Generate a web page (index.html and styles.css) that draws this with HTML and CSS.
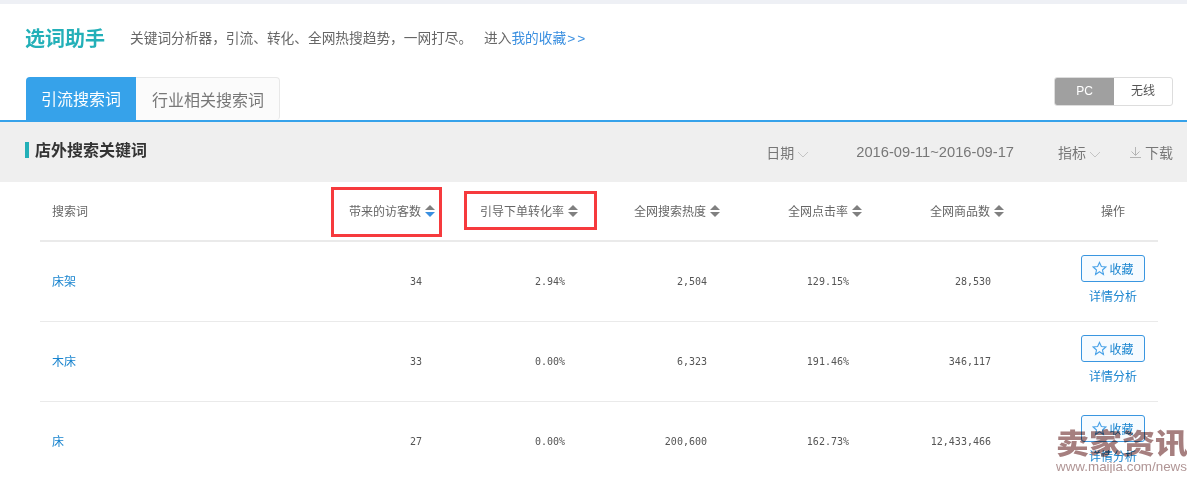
FILE: index.html
```html
<!DOCTYPE html>
<html>
<head>
  <title>选词助手</title>
  <link rel="stylesheet" href="styles.css">
</head>
<body>
  <div class="top-strip"></div>
  <div class="page-head">
    <h1 class="page-title">选词助手</h1>
    <p class="page-desc">关键词分析器，引流、转化、全网热搜趋势，一网打尽。</p>
    <p class="page-link">进入<a href="#">我的收藏<span class="more">&gt;&gt;</span></a></p>
  </div>

  <div class="tab-bar">
    <div class="tab active">引流搜索词</div>
    <div class="tab">行业相关搜索词</div>
    <div class="device-switch">
      <div class="device active">PC</div>
      <div class="device">无线</div>
    </div>
  </div>

  <div class="section-bar">
    <h2 class="section-title">店外搜索关键词</h2>
    <div class="section-tools">
      <span class="tool tool-date">日期<svg class="chevron" viewBox="0 0 12 7"><path d="M1 1l5 5 5-5"/></svg></span>
      <span class="tool tool-range">2016-09-11~2016-09-17</span>
      <span class="tool tool-metric">指标<svg class="chevron" viewBox="0 0 12 7"><path d="M1 1l5 5 5-5"/></svg></span>
      <span class="tool tool-download"><svg class="download" viewBox="0 0 11 11"><path d="M5.500 0v8M1.500 4.500l4 4 4-4M0 10.500h11"/></svg>下载</span>
    </div>
  </div>

  <div class="table">
    <div class="row head">
      <div class="cell first">搜索词</div>
      <div class="cell num">带来的访客数<span class="sort down"></span></div>
      <div class="cell num">引导下单转化率<span class="sort"></span></div>
      <div class="cell num">全网搜索热度<span class="sort"></span></div>
      <div class="cell num">全网点击率<span class="sort"></span></div>
      <div class="cell num">全网商品数<span class="sort"></span></div>
      <div class="cell ops">操作</div>
    </div>

    <div class="row">
      <div class="cell first"><a href="#">床架</a></div>
      <div class="cell val">34</div>
      <div class="cell val">2.94%</div>
      <div class="cell val">2,504</div>
      <div class="cell val">129.15%</div>
      <div class="cell val">28,530</div>
      <div class="cell ops">
        <button class="fav-btn" type="button"><svg class="star" viewBox="0 0 16 16"><path d="M8 1.500l2 4.400 4.700.5-3.500 3.200 1 4.700L8 11.400l-4.200 2.900 1-4.700L1.300 6.400l4.700-.5z"/></svg>收藏</button>
        <a href="#" class="detail">详情分析</a>
      </div>
    </div>

    <div class="row">
      <div class="cell first"><a href="#">木床</a></div>
      <div class="cell val">33</div>
      <div class="cell val">0.00%</div>
      <div class="cell val">6,323</div>
      <div class="cell val">191.46%</div>
      <div class="cell val">346,117</div>
      <div class="cell ops">
        <button class="fav-btn" type="button"><svg class="star" viewBox="0 0 16 16"><path d="M8 1.500l2 4.400 4.700.5-3.500 3.200 1 4.700L8 11.400l-4.200 2.900 1-4.700L1.300 6.400l4.700-.5z"/></svg>收藏</button>
        <a href="#" class="detail">详情分析</a>
      </div>
    </div>

    <div class="row">
      <div class="cell first"><a href="#">床</a></div>
      <div class="cell val">27</div>
      <div class="cell val">0.00%</div>
      <div class="cell val">200,600</div>
      <div class="cell val">162.73%</div>
      <div class="cell val">12,433,466</div>
      <div class="cell ops">
        <button class="fav-btn" type="button"><svg class="star" viewBox="0 0 16 16"><path d="M8 1.500l2 4.400 4.700.5-3.500 3.200 1 4.700L8 11.400l-4.200 2.900 1-4.700L1.300 6.400l4.700-.5z"/></svg>收藏</button>
        <a href="#" class="detail">详情分析</a>
      </div>
    </div>
  </div>

  <div class="red-box box-one"></div>
  <div class="red-box box-two"></div>

  <div class="watermark">
    <div class="wm-name">卖家资讯</div>
    <div class="wm-url">www.maijia.com/news</div>
  </div>
</body>
</html>
```

FILE: styles.css
```css
html, body {
  height: 478px;
  overflow: hidden;
}
body {
  margin: 0;
  position: relative;
  background-color: #fff;
  color: #666;
  font-family: "Liberation Sans", "Noto Sans CJK SC", sans-serif;
  font-size: 12px;
}
a {
  color: #1a85cf;
  text-decoration: none;
}
h1, h2, p {
  margin: 0;
  font-weight: normal;
}
.top-strip {
  height: 4px;
  background-color: #eef0f5;
}
.page-head {
  display: flex;
  align-items: center;
  height: 73px;
  padding: 0 0 7px 25px;
  box-sizing: border-box;
}
.page-title {
  color: #23b0b8;
  font-size: 20px;
  font-weight: 700;
  width: 105px;
}
.page-desc {
  font-size: 13.7px;
  color: #666;
  width: 354px;
  white-space: nowrap;
}
.page-link {
  font-size: 13.7px;
}
.page-link a {
  color: #3a8fe0;
}
.more {
  margin-left: 1px;
  letter-spacing: 2px;
}
.tab-bar {
  display: flex;
  align-items: flex-end;
  height: 43px;
  padding-left: 26px;
  padding-right: 14px;
}
.tab {
  height: 43px;
  line-height: 45px;
  box-sizing: border-box;
  font-size: 16px;
  color: #777;
  background-color: #fbfbfb;
  border: 1px solid #e8e8e8;
  border-bottom: none;
  border-left: none;
  border-radius: 0 4px 4px 0;
  padding: 0 15px 0 16px;
}
.tab.active {
  color: #fff;
  background-color: #36a2ea;
  border: none;
  border-radius: 4px 0 0 0;
  padding: 0 15px;
}
.device-switch {
  display: flex;
  margin-left: auto;
  align-self: flex-start;
  height: 29px;
  border: 1px solid #ddd;
  border-radius: 3px;
  overflow: hidden;
  box-sizing: border-box;
}
.device {
  width: 58px;
  line-height: 27px;
  text-align: center;
  color: #555;
}
.device.active {
  width: 59px;
  background-color: #a0a0a0;
  color: #fff;
}
.section-bar {
  display: flex;
  height: 60px;
  background-color: #efefef;
  border-top: 2px solid #36a2ea;
  padding: 0 14px 0 25px;
}
.section-title {
  align-self: flex-start;
  margin-top: 20px;
  height: 16px;
  line-height: 17px;
  border-left: 4px solid #23b0b8;
  padding-left: 6px;
  font-size: 16px;
  font-weight: 700;
  color: #333;
}
.section-tools {
  display: flex;
  align-items: center;
  margin-left: auto;
  height: 60px;
  font-size: 14px;
  color: #777;
}
.tool-range {
  margin: 0 44px 0 47px;
  font-size: 14.7px;
}
.tool-download {
  margin-left: 29px;
}
.chevron {
  width: 12px;
  height: 7px;
  margin-left: 3px;
  fill: none;
  stroke: #c4c4c4;
}
.download {
  width: 11px;
  height: 11px;
  margin-right: 4px;
  fill: none;
  stroke: #b5b5b5;
}
.table {
  margin: 0 29px 0 40px;
}
.row {
  display: grid;
  grid-template-columns: 252px 143px 143px 142px 142px 142px 1fr;
  height: 80px;
  border-bottom: 1px solid #eaeaea;
  box-sizing: border-box;
}
.row.head {
  height: 60px;
  border-bottom: 2px solid #eaeaea;
}
.cell {
  display: flex;
  align-items: center;
  justify-content: flex-end;
}
.cell.first {
  justify-content: flex-start;
  padding-left: 12px;
  padding-bottom: 2px;
}
.cell.val {
  padding-right: 13px;
  font-family: "DejaVu Sans Mono", monospace;
  font-size: 10px;
  color: #555;
}
.cell.ops {
  flex-direction: column;
  justify-content: center;
  padding-left: 64px;
  padding-bottom: 2px;
}
.row.head .cell {
  padding-bottom: 2px;
}
.sort {
  display: inline-flex;
  flex-direction: column;
  justify-content: space-between;
  height: 12px;
  margin-left: 4px;
  margin-top: 2px;
}
.sort::before,
.sort::after {
  content: "";
  border-left: 5px solid transparent;
  border-right: 5px solid transparent;
}
.sort::before {
  border-bottom: 5px solid #808080;
}
.sort::after {
  border-top: 5px solid #808080;
}
.sort.down::after {
  border-top-color: #3a8fe0;
}
.fav-btn {
  display: flex;
  align-items: center;
  justify-content: center;
  width: 64px;
  height: 27px;
  padding: 0 0 1px;
  border: 1px solid #3a96e0;
  border-radius: 3px;
  background-color: #f6fbff;
  color: #1a85cf;
  font-family: inherit;
  font-size: 12px;
}
.star {
  width: 15px;
  height: 15px;
  margin-right: 2px;
  fill: none;
  stroke: #4aa3e8;
  stroke-width: 1.2;
}
.detail {
  margin-top: 6px;
  line-height: 18px;
}
.red-box {
  position: absolute;
  border: 3px solid #f63a3d;
  box-sizing: border-box;
}
.box-one {
  left: 331px;
  top: 187px;
  width: 111px;
  height: 50px;
}
.box-two {
  left: 464px;
  top: 191px;
  width: 133px;
  height: 39px;
}
.watermark {
  position: absolute;
  left: 1056px;
  top: 429px;
  width: 131px;
  overflow: hidden;
  white-space: nowrap;
  mix-blend-mode: multiply;
}
.wm-name {
  color: #a67f7f;
  font-size: 33px;
  font-weight: 900;
  line-height: 31px;
  height: 31px;
  transform: scaleY(.85);
}
.wm-url {
  color: #b09595;
  font-size: 13.4px;
  line-height: 13px;
}
```
